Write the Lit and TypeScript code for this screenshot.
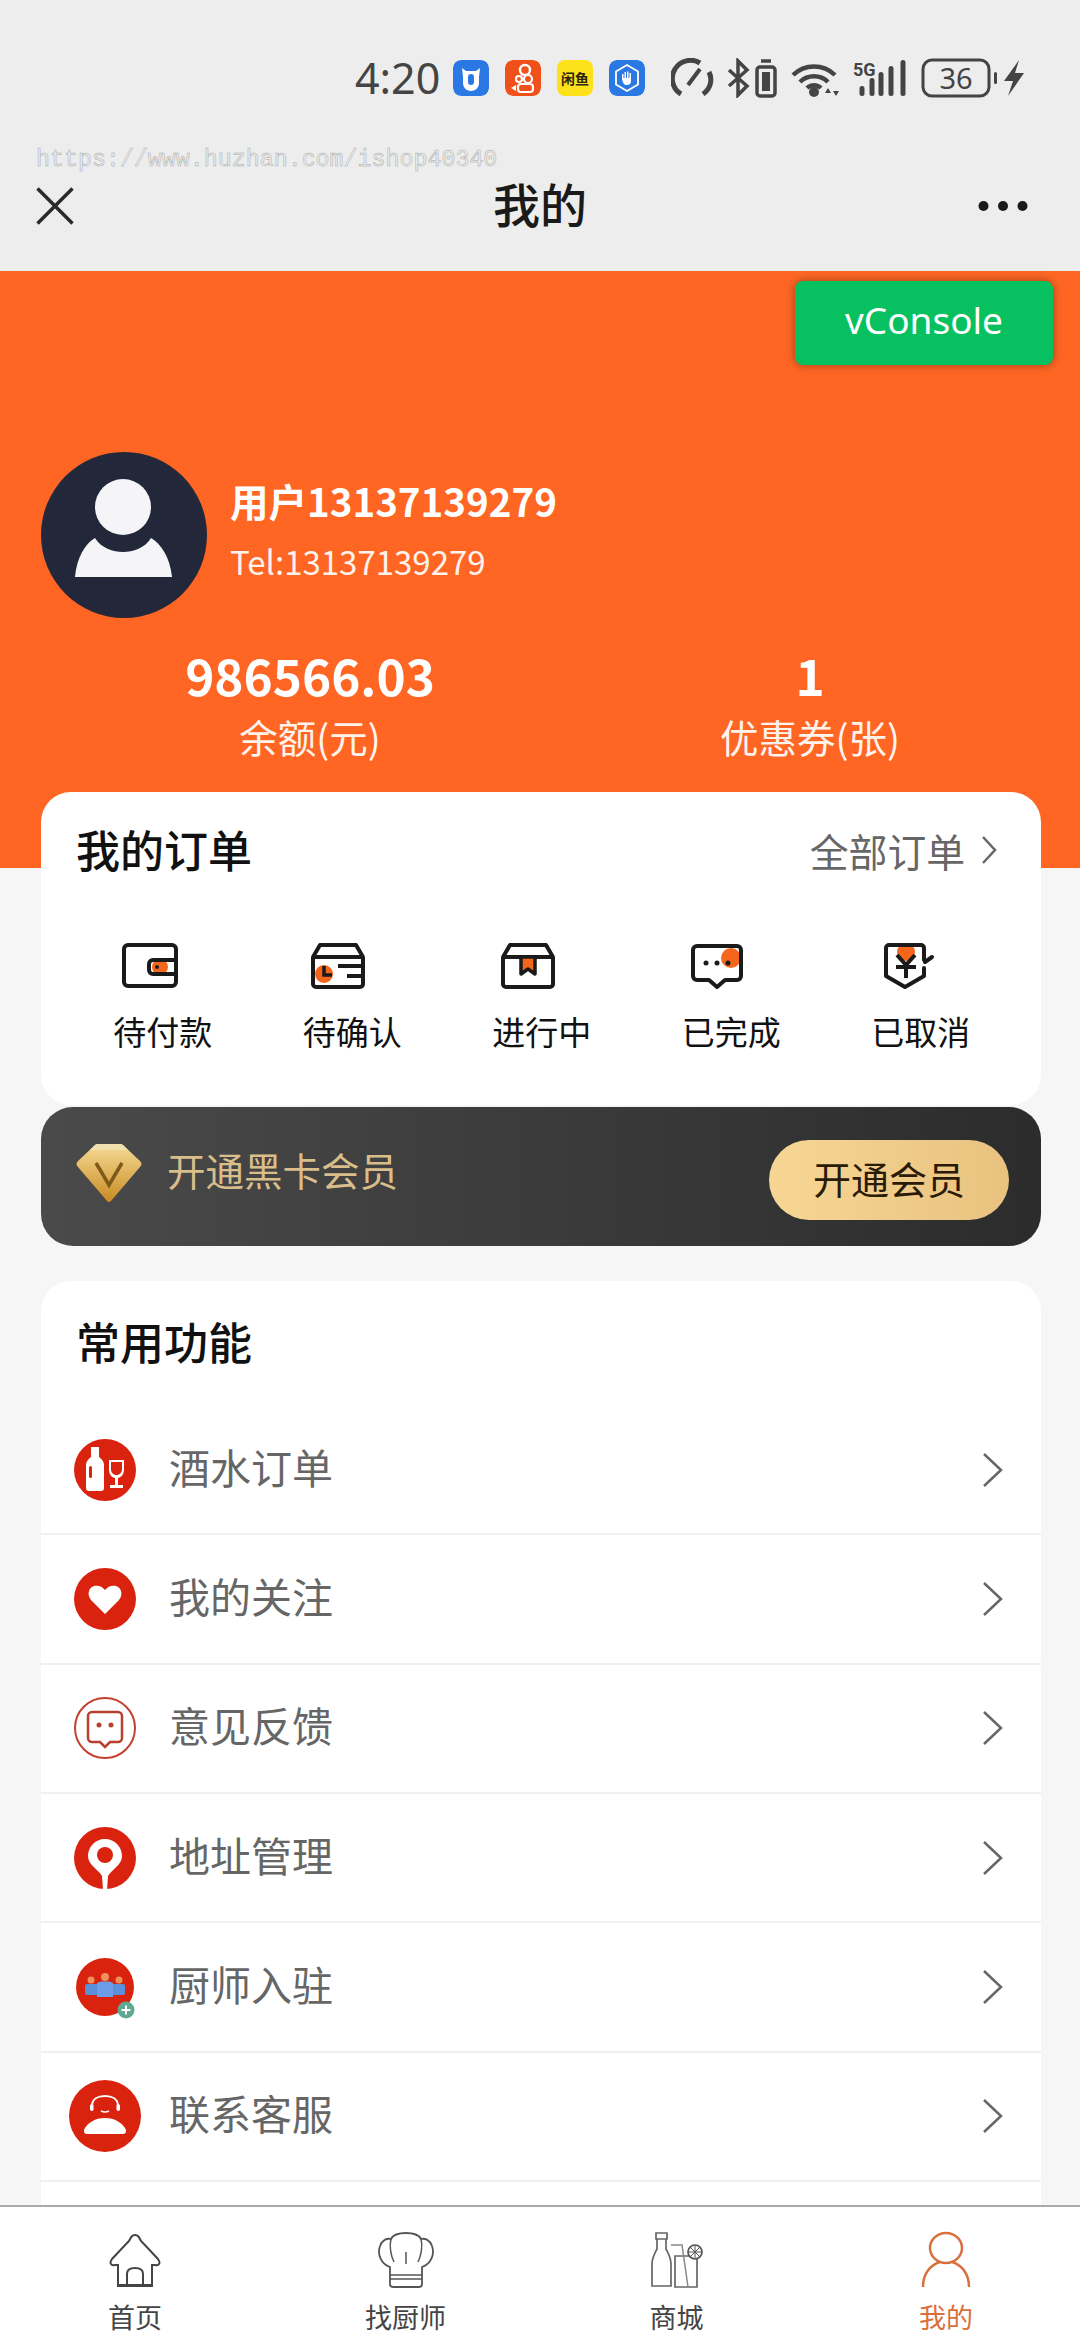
import { LitElement, html, css, svg } from "lit";
import { customElement } from "lit/decorators.js";

const D = "#1a1a1a";
const O = "#f4661c";

const orderIcons = [
  svg`<rect x="7" y="7" width="52" height="41" rx="4" fill="none" stroke="${D}" stroke-width="4"/>
      <circle cx="43" cy="29" r="8" fill="${O}"/>
      <path d="M59 22H36a4 4 0 0 0-4 4v6a4 4 0 0 0 4 4h23" fill="none" stroke="${D}" stroke-width="4"/>
      <circle cx="40" cy="29" r="2" fill="${D}"/>`,
  svg`<circle cx="18" cy="36" r="9" fill="${O}"/>
      <path d="M7 19L14 7H50L57 19M7 19V46a3 3 0 0 0 3 3H54a3 3 0 0 0 3-3V19ZM32 28H57M41 38H57" fill="none" stroke="${D}" stroke-width="4" stroke-linejoin="round"/>
      <path d="M18 28V37H26" fill="none" stroke="${D}" stroke-width="3.5"/>`,
  svg`<path d="M7 19L14 7H50L57 19M7 19V46a3 3 0 0 0 3 3H54a3 3 0 0 0 3-3V19Z" fill="none" stroke="${D}" stroke-width="4" stroke-linejoin="round"/>
      <path d="M25 19V36L32 31L39 36V19Z" fill="${O}" stroke="${D}" stroke-width="3.5" stroke-linejoin="round"/>`,
  svg`<circle cx="46" cy="20" r="10" fill="${O}"/>
      <path d="M12 8H52a4 4 0 0 1 4 4V38a4 4 0 0 1-4 4H40L32 49L24 42H12a4 4 0 0 1-4-4V12a4 4 0 0 1 4-4Z" fill="none" stroke="${D}" stroke-width="4" stroke-linejoin="round"/>
      <circle cx="21" cy="25" r="2.5" fill="${D}"/><circle cx="32" cy="25" r="2.5" fill="${D}"/><circle cx="43" cy="25" r="2.5" fill="${D}"/>`,
  svg`<circle cx="31" cy="14" r="9" fill="${O}"/>
      <path d="M49 22V10a3 3 0 0 0-3-3H14a3 3 0 0 0-3 3V38L30 49L49 38V30M50 24L57 19" fill="none" stroke="${D}" stroke-width="4" stroke-linejoin="round" stroke-linecap="round"/>
      <path d="M22 17L31 27L40 17M21 29H41M31 27V40" fill="none" stroke="${D}" stroke-width="4"/>`,
];

const R = "#d9230f";
const rowIcons = [
  svg`<circle cx="40" cy="40" r="31" fill="${R}"/>
      <path d="M26 17H34V27C37 29 39 32 39 35V58a3 3 0 0 1-3 3H24a3 3 0 0 1-3-3V35C21 32 23 29 26 27Z" fill="#fff"/>
      <rect x="24" y="36" width="3" height="12" rx="1.5" fill="${R}"/>
      <path d="M44 30H59V40C59 45 55 48 53 48V55H58V58H45V55H50V48C48 48 44 45 44 40ZM46 32V39C46 43 49 45 51.500 45C54 45 57 43 57 39V32Z" fill="#fff" fill-rule="evenodd"/>`,
  svg`<circle cx="40" cy="40" r="31" fill="${R}"/>
      <path d="M40 55L26 41C22 36 23 29 29 27C33 26 37 27 40 31C43 27 47 26 51 27C57 29 58 36 54 41Z" fill="#fff"/>`,
  svg`<circle cx="40" cy="40" r="30" fill="#fff" stroke="#c4402f" stroke-width="2"/>
      <path d="M27 24H53a4 4 0 0 1 4 4V50a4 4 0 0 1-4 4H45L40 59L35 54H27a4 4 0 0 1-4-4V28a4 4 0 0 1 4-4Z" fill="none" stroke="#b8402f" stroke-width="2.500"/>
      <circle cx="34" cy="37" r="2.500" fill="#b8402f"/><circle cx="46" cy="37" r="2.500" fill="#b8402f"/>`,
  svg`<circle cx="40" cy="40" r="31" fill="${R}"/>
      <path d="M40 21C50 21 57 29 57 38C57 47 47 51 43 58L42 72H38L37 58C33 51 23 47 23 38C23 29 30 21 40 21Z" fill="#fff"/>
      <circle cx="40" cy="37" r="8" fill="${R}"/>`,
  svg`<circle cx="40" cy="40" r="29" fill="${R}"/>
      <circle cx="26" cy="33" r="3.500" fill="#f0905a"/><circle cx="54" cy="33" r="3.500" fill="#f0905a"/>
      <rect x="20" y="37" width="13" height="11" rx="2" fill="#5b8fd9"/><rect x="47" y="37" width="13" height="11" rx="2" fill="#5b8fd9"/>
      <circle cx="40" cy="30" r="4" fill="#f0905a"/>
      <path d="M32 37C32 35 35 34.500 40 34.500C45 34.500 48 35 48 37V50H32Z" fill="#6b9ee6"/>
      <circle cx="61" cy="63" r="8.500" fill="#5fa893"/>
      <path d="M61 58.500V67.500M56.500 63H65.500" stroke="#fff" stroke-width="2"/>`,
  svg`<circle cx="40" cy="40" r="36" fill="${R}"/>
      <path d="M27 32V30C27 23 33 20 40 20C47 20 53 23 53 30V32" fill="none" stroke="#fff" stroke-width="2"/>
      <rect x="25" y="28" width="3.500" height="7" rx="1.700" fill="#fff"/><rect x="51.500" y="28" width="3.500" height="7" rx="1.700" fill="#fff"/>
      <path d="M36 35Q40 37 44 35" fill="none" stroke="#fff" stroke-width="1.500"/>
      <path d="M22 58C19 58 18 55 20 52C23 47 30 42 40 42C50 42 57 47 60 52C62 55 61 58 58 58Z" fill="#fff"/>`,
];

const rows = ["酒水订单", "我的关注", "意见反馈", "地址管理", "厨师入驻", "联系客服"];
const orders = ["待付款", "待确认", "进行中", "已完成", "已取消"];

const T = "#444";
const tabs = [
  { label: "首页", icon: svg`<path d="M30 5C27 5 26 7 24 11L7 29C4 33 6 36 10 35H13V56H47V35H50C54 36 56 33 53 29L36 11C34 7 33 5 30 5Z" fill="none" stroke="${T}" stroke-width="2"/><path d="M22 56V44C22 39 26 38 30 38C34 38 38 39 38 44V56M13 55H47" fill="none" stroke="${T}" stroke-width="2"/>` },
  { label: "找厨师", icon: svg`<path d="M14 37C5 34 1 24 4 16C6 10 11 8 15 9C17 5 23 3 30 3C37 3 43 5 45 9C49 8 54 10 56 16C59 24 55 34 46 37V54a3 3 0 0 1-3 3H17a3 3 0 0 1-3-3Z" fill="none" stroke="#555" stroke-width="1.800"/><path d="M14 45H46M14 49H46" stroke="#555" stroke-width="1.600"/><path d="M15 9C13 16 15 26 18 32M45 9C47 16 45 26 42 32M30 22V34" fill="none" stroke="#555" stroke-width="1.500"/>` },
  { label: "商城", icon: svg`<path d="M9 3H20V9H19V19C22 25 24 28 24 34V56H5V34C5 28 7 25 10 19V9H9ZM9 9H20" fill="none" stroke="#666" stroke-width="1.700"/><path d="M28 26H50V57H28ZM28 26" fill="none" stroke="#666" stroke-width="1.700"/><path d="M24 15H35L41 57" fill="none" stroke="#888" stroke-width="1.500"/><circle cx="48" cy="22" r="7" fill="#fff" stroke="#555" stroke-width="1.700"/><path d="M48 15V29M41 22H55M43 17L53 27M53 17L43 27" stroke="#555" stroke-width="1"/>` },
  { label: "我的", icon: svg`<ellipse cx="30" cy="18" rx="16" ry="15" fill="none" stroke="#d9703c" stroke-width="2.500"/><path d="M7 57C7 44 14 35 24 32M53 57C53 44 46 35 36 32" fill="none" stroke="#d9703c" stroke-width="2.500"/>`, active: true },
];

@customElement("app-root")
export class AppRoot extends LitElement {
  static styles = css`
    :host { display: flex; flex-direction: column; width: 1080px; height: 2340px; overflow: hidden; position: relative; background: #f6f6f6; font-family: "Noto Sans CJK SC", "Noto Sans", sans-serif; color: #111; }
    .top { background: #ededed; height: 271px; flex: none; }
    .status { height: 140px; box-sizing: border-box; padding: 58px 56px 0 0; display: flex; justify-content: flex-end; align-items: flex-start; color: #444; }
    .time { font: 400 43px/40px "Noto Sans", sans-serif; margin-right: 12px; width: 86px; white-space: nowrap; }
    .apps { display: flex; gap: 16px; margin-top: 2px; margin-right: 26px; }
    .app { width: 36px; height: 36px; border-radius: 8px; display: block; }
    .xianyu { display: flex; align-items: center; justify-content: center; background: #fde11a; color: #2a2410; font: 700 14px/20px "Noto Sans CJK SC", sans-serif; white-space: nowrap; }
    .nav { height: 131px; display: grid; grid-template-columns: 1fr auto 1fr; align-items: center; padding: 0 36px; }
    .title { font-size: 47px; line-height: 60px; font-weight: 500; color: #1a1a1a; margin-top: -6px; }
    .dots { justify-self: end; display: block; margin-right: 16px; }
    .mark { position: absolute; left: 36px; top: 146px; font: 400 23.300px/28px "Liberation Mono", monospace; color: transparent; -webkit-text-stroke: 0.5px #a9a9a9; white-space: nowrap; }
    .vconsole { position: absolute; left: 795px; top: 281px; width: 258px; height: 84px; border-radius: 8px; background: #07c160; color: #fff; box-shadow: 0 0 10px rgba(0,0,0,.4); font: 400 37px/78px "Noto Sans", sans-serif; text-align: center; }
    main { flex: 1; min-height: 0; overflow: hidden; }
    .hero { height: 597px; box-sizing: border-box; background: #ff6623; padding-top: 181px; color: #fff; }
    .profile { display: flex; padding-left: 41px; gap: 23px; align-items: flex-start; }
    .avatar { width: 166px; height: 166px; display: block; flex: none; }
    .info { padding-top: 23px; height: 143px; box-sizing: border-box; }
    .name { font-size: 38.500px; line-height: 50px; font-weight: 700; white-space: nowrap; }
    .tel { font-size: 33px; line-height: 50px; margin-top: 11px; opacity: .92; white-space: nowrap; }
    .stats { display: grid; grid-template-columns: 500px 500px; padding-left: 60px; margin-top: 27px; text-align: center; }
    .num { font-size: 49.500px; line-height: 60px; font-weight: 700; }
    .lbl { font-size: 38.500px; line-height: 50px; margin-top: 6px; opacity: .92; }
    .content { margin: -76px 39px 0 41px; position: relative; }
    .card { background: #fff; border-radius: 30px; }
    .orders { height: 313px; }
    .head { height: 120px; display: flex; justify-content: space-between; align-items: center; padding: 0 44px 0 35px; }
    .h { font-size: 44px; line-height: 60px; font-weight: 500; color: #111; margin-top: -6px; }
    .all { display: flex; align-items: center; gap: 16px; color: #666; font-size: 38.800px; line-height: 50px; margin-top: -4px; }
    .grid { display: grid; grid-template-columns: repeat(5, 189.500px); margin-left: 13px; padding-top: 26px; }
    .cell { display: flex; flex-direction: column; align-items: center; }
    .cell svg { display: block; width: 64px; height: 56px; }
    .cell span { font-size: 33px; line-height: 46px; margin: 14px 0 0 28px; color: #111; }
    .vip { height: 139px; margin-top: 2px; border-radius: 32px; background: linear-gradient(90deg, #4a4a4a, #2c2c2c); display: flex; align-items: center; padding: 0 32px 0 34px; }
    .gem { width: 68px; height: 60px; display: block; flex: none; margin-right: 24px; margin-top: -7px; }
    .vip-t { flex: 1; color: #d9bd8a; font-size: 38.500px; line-height: 50px; margin-top: -15px; }
    .btn { width: 240px; height: 80px; border-radius: 40px; background: linear-gradient(90deg, #f7d694, #e9c27f); color: #2a1a08; font-size: 38px; line-height: 76px; text-align: center; margin-top: 7px; }
    .func { margin-top: 35px; border-radius: 30px 30px 0 0; padding-bottom: 60px; }
    .func-h { height: 125px; display: flex; align-items: center; padding: 0 35px; box-sizing: border-box; }
    .row { height: 129.330px; box-sizing: border-box; border-bottom: 2px solid #f0f0f0; display: flex; align-items: center; padding: 0 38px 0 24px; gap: 24px; }
    .row svg.ic { width: 80px; height: 80px; display: block; flex: none; }
    .row span { flex: 1; font-size: 41px; line-height: 50px; color: #666; margin-top: -8px; }
    .tabbar { flex: none; height: 135px; box-sizing: border-box; background: #fff; border-top: 2px solid #aaa; display: grid; grid-template-columns: 270px 271px 271px 268px; }
    .tab { display: flex; flex-direction: column; align-items: center; padding-top: 23px; color: #444; }
    .tab svg { width: 60px; height: 60px; display: block; }
    .tab span { font-size: 27px; line-height: 36px; margin-top: 9px; }
    .tab.on span { color: #d9703c; }
  `;

  private chevron(w: number, h: number) {
    return html`<svg width="${w}" height="${h}" viewBox="0 0 ${w} ${h}"><path d="M2 2L${w - 2} ${h / 2}L2 ${h - 2}" fill="none" stroke="#666" stroke-width="2.500"/></svg>`;
  }

  render() {
    return html`
      <div class="top">
        <div class="status">
          <span class="time">4:20</span>
          <div class="apps">
            <svg class="app" viewBox="0 0 36 36"><rect width="36" height="36" rx="8" fill="#2a78e4"/><path d="M9 8L13 11H23L27 8L26 17V23C26 28 22 31 18 31C14 31 10 28 10 23V17Z" fill="#fff"/><rect x="15" y="14" width="6" height="11" rx="3" fill="#2a78e4"/></svg>
            <svg class="app" viewBox="0 0 36 36"><rect width="36" height="36" rx="8" fill="#f0501a"/><circle cx="20" cy="10" r="5" fill="none" stroke="#fff" stroke-width="2.500"/><circle cx="14" cy="19" r="3" fill="none" stroke="#fff" stroke-width="2.200"/><circle cx="23" cy="19" r="4" fill="none" stroke="#fff" stroke-width="2.200"/><rect x="13" y="24" width="15" height="8" rx="3" fill="none" stroke="#fff" stroke-width="2.200"/><path d="M11 25L6 28L11 31Z" fill="#fff"/></svg>
            <div class="app xianyu">闲鱼</div>
            <svg class="app" viewBox="0 0 36 36"><rect width="36" height="36" rx="8" fill="#2a78e4"/><path d="M18 5L29 11.500V24.500L18 31L7 24.500V11.500Z" fill="none" stroke="#fff" stroke-width="1.800"/><path d="M13 19V14h1.500V18H15.500V12h1.500V18H18V11.500h1.500V18H20.500V13h1.500V21C22 24 20 25 18 25C15 25 14 23 13 19Z" fill="#fff"/></svg>
          </div>
          <svg width="353" height="40" viewBox="0 0 353 40" style="display:block">
            <g fill="none" stroke="#444">
              <path d="M10 36A17 17 0 0 1 29 5M38 14A17 17 0 0 1 32 36" stroke-width="5"/>
              <path d="M17 27L29 11" stroke-width="4"/>
              <path d="M58 12L76 28L67 37V3L76 12L58 28" stroke-width="3.500"/>
              <rect x="86" y="9" width="18" height="29" rx="3" stroke-width="3.500"/>
              <path d="M90 3H100" stroke-width="3.500"/>
              <path d="M122 17A30 30 0 0 1 164 17M129 24A20 20 0 0 1 157 24M136 30A10 10 0 0 1 150 30" stroke-width="4.500"/>
              <rect x="252" y="2" width="66" height="36" rx="9" stroke-width="3"/>
            </g>
            <g fill="#444">
              <rect x="91" y="14" width="8" height="19"/>
              <circle cx="143" cy="34" r="5"/>
              <path d="M157 30L160 35H154ZM165 38L162 33H168Z"/>
              <text x="182" y="18" font-family="Roboto, sans-serif" font-size="18" font-weight="700">5G</text>
              <rect x="188.500" y="28" width="5" height="10" rx="2.500"/>
              <rect x="198.500" y="20" width="5" height="18" rx="2.500"/>
              <rect x="207.500" y="14" width="5" height="24" rx="2.500"/>
              <rect x="217.500" y="8" width="5" height="30" rx="2.500"/>
              <rect x="229.500" y="2" width="5" height="36" rx="2.500"/>
              <text x="285" y="31" text-anchor="middle" font-family="Noto Sans, sans-serif" font-size="29">36</text>
              <rect x="323" y="14" width="3" height="12" rx="1.500"/>
              <path d="M348 2L333 23H342L337 38L353 15H344Z"/>
            </g>
          </svg>
        </div>
        <div class="nav">
          <svg width="38" height="38" viewBox="0 0 38 38" style="display:block"><path d="M1.500 1.500L36.500 36.500M36.500 1.500L1.500 36.500" stroke="#2a2a2a" stroke-width="3.500"/></svg>
          <div class="title">我的</div>
          <svg class="dots" width="50" height="12" viewBox="0 0 50 12"><circle cx="5.500" cy="6" r="5" fill="#1a1a1a"/><circle cx="25" cy="6" r="5" fill="#1a1a1a"/><circle cx="44.500" cy="6" r="5" fill="#1a1a1a"/></svg>
        </div>
      </div>
      <main>
        <section class="hero">
          <div class="profile">
            <svg class="avatar" viewBox="0 0 166 166"><circle cx="83" cy="83" r="83" fill="#23273a"/><ellipse cx="82" cy="55" rx="28" ry="28" fill="#f5f5f7"/><path d="M34 125C36 105 44 92 54 86C60 96 72 100 82 100C92 100 104 96 110 86C120 92 129 105 131 125Z" fill="#f5f5f7"/></svg>
            <div class="info">
              <div class="name">用户13137139279</div>
              <div class="tel">Tel:13137139279</div>
            </div>
          </div>
          <div class="stats">
            <div><div class="num">986566.03</div><div class="lbl">余额(元)</div></div>
            <div><div class="num">1</div><div class="lbl">优惠券(张)</div></div>
          </div>
        </section>
        <div class="content">
          <section class="card orders">
            <div class="head">
              <div class="h">我的订单</div>
              <div class="all">全部订单 ${this.chevron(16, 30)}</div>
            </div>
            <div class="grid">
              ${orders.map((o, i) => html`<div class="cell"><svg viewBox="0 0 64 56">${orderIcons[i]}</svg><span>${o}</span></div>`)}
            </div>
          </section>
          <section class="vip">
            <svg class="gem" viewBox="0 0 68 60">
              <defs><linearGradient id="g" x1="0" y1="0" x2="0" y2="1"><stop offset="0" stop-color="#f6dc96"/><stop offset="1" stop-color="#c98a22"/></linearGradient></defs>
              <path d="M20 2Q21 1 23 1H45Q47 1 48 2L65 18Q68 21 65 24L36 58Q34 60 32 58L3 24Q0 21 3 18Z" fill="url(#g)"/>
              <path d="M20 2Q21 1 23 1H45Q47 1 48 2L53 7H15Z" fill="#efe0ad"/>
              <path d="M21 20L34 42L47 20" fill="none" stroke="#7d5a18" stroke-width="3.500"/>
            </svg>
            <div class="vip-t">开通黑卡会员</div>
            <div class="btn">开通会员</div>
          </section>
          <section class="card func">
            <div class="func-h"><div class="h">常用功能</div></div>
            ${rows.map((r, i) => html`<div class="row"><svg class="ic" viewBox="0 0 80 80">${rowIcons[i]}</svg><span>${r}</span>${this.chevron(21, 36)}</div>`)}
          </section>
        </div>
      </main>
      <nav class="tabbar">
        ${tabs.map((t) => html`<div class="tab ${t.active ? "on" : ""}"><svg viewBox="0 0 60 60">${t.icon}</svg><span>${t.label}</span></div>`)}
      </nav>
      <div class="mark">https://www.huzhan.com/ishop40340</div>
      <div class="vconsole">vConsole</div>
    `;
  }
}
